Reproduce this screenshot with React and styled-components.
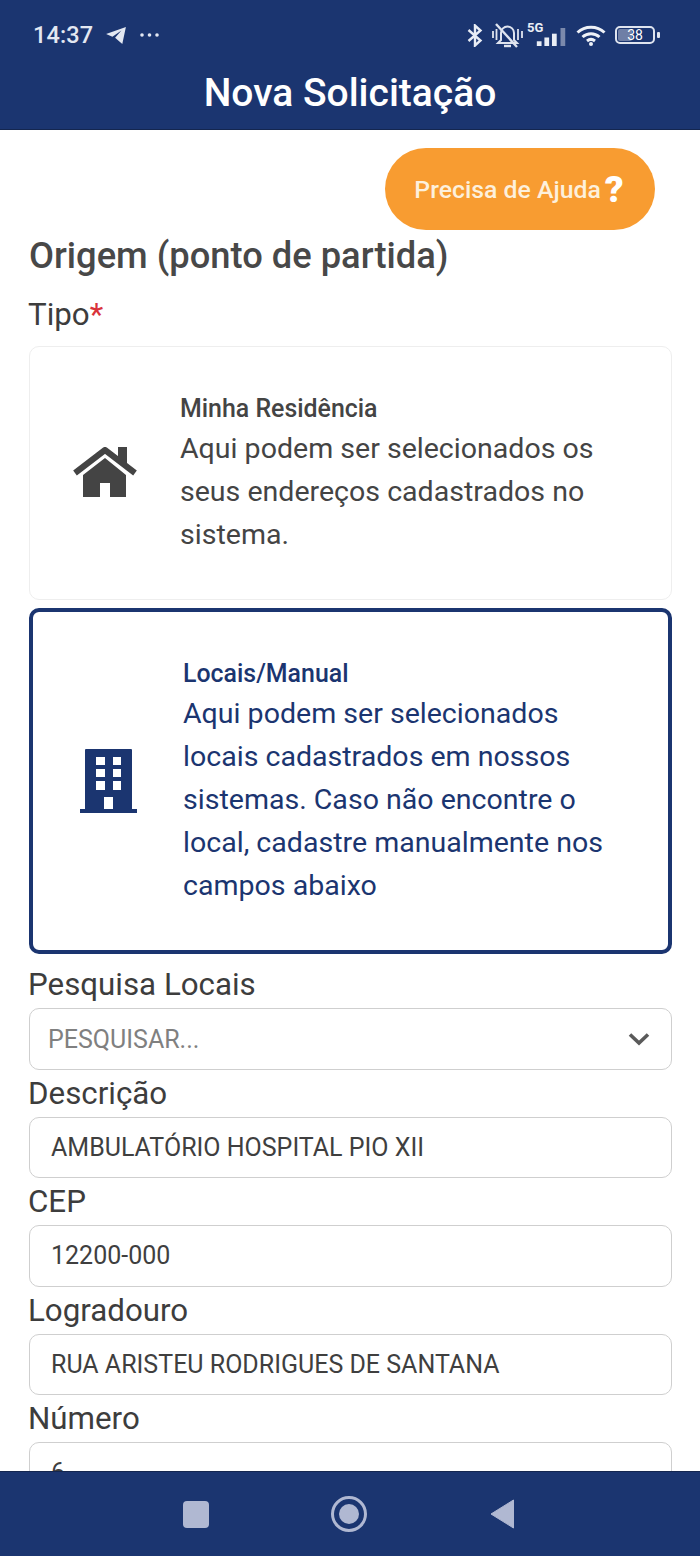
import React from "react";
import styled, { createGlobalStyle } from "styled-components";

const Global = createGlobalStyle`
  html, body { margin: 0; padding: 0; background: #fff; }
  * { box-sizing: border-box; }
`;
const NAVY = "#1b3570";
const Screen = styled.div`
  width: 700px; height: 1556px; display: flex; flex-direction: column; overflow: hidden;
  font-family: Roboto, "Liberation Sans", sans-serif; color: #3b3b3b; background: #fff;
`;
const Header = styled.header`
  height: 130px; flex: none; background: ${NAVY}; color: #fff; display: flex; flex-direction: column;
  border-bottom: 1px solid #14264f;
`;
const StatusBar = styled.div`
  height: 70px; padding: 0 45px 0 33px; display: flex; justify-content: space-between; align-items: center; flex: none;
  color: #e3e8f2;
`;
const StatusGroup = styled.div`display: flex; align-items: center; gap: ${p => p.$gap || 0}px;`;
const Clock = styled.span`font-size: 23.5px; font-weight: 500; letter-spacing: 0.1px;`;
const Title = styled.h1`
  margin: 1px 0 0; text-align: center; font-size: 39px; font-weight: 500; line-height: 44px; color: #fff;
`;
const FiveG = styled.div`
  position: relative; width: 40px; height: 24px; margin-left: -5px; padding: 5px 0 0 9px;
  & > svg { display: block; }
`;
const FiveGLabel = styled.span`
  position: absolute; left: 0; top: -3px; font-size: 13px; font-weight: 700; color: #e9edf5;
`;
const Battery = styled.div`
  width: 40px; height: 18px; border: 2px solid #dfe4ef; border-radius: 5px; position: relative; display: flex;
  align-items: center; justify-content: center; font-size: 14px; color: #fff; font-weight: 400; padding: 1px;
  &::after { content: ""; position: absolute; right: -7px; top: 4px; width: 3px; height: 6px; background: #dfe4ef; border-radius: 1px; }
`;
const BatteryFill = styled.span`
  position: absolute; left: 1px; top: 1px; bottom: 1px; width: 38%; background: #6f7fa6; border-radius: 2px;
`;
const BatteryText = styled.span`position: relative; line-height: 1;`;

const Content = styled.main`
  flex: 1; min-height: 0; overflow: hidden; padding: 18px 28px 0 29px; display: flex; flex-direction: column;
`;
const HelpRow = styled.div`display: flex; justify-content: flex-end; padding-right: 17px;`;
const HelpButton = styled.button`
  width: 270px; height: 82px; border: none; border-radius: 41px; background: #f89c31; color: #fdf0dc;
  display: flex; align-items: center; justify-content: center; gap: 4px; padding: 0 2px 0 0;
  font: 500 24.8px Roboto, sans-serif;
`;
const HelpMark = styled.span`font-size: 37px; font-weight: 900; color: #fff; line-height: 1;`;
const SectionTitle = styled.h2`
  margin: 5px 0 0; font-size: 36.3px; font-weight: 500; line-height: 42px; color: #484848;
`;
const FieldLabel = styled.div`
  font-size: 31.3px; line-height: 38px; color: #3d3d3d; flex: none; margin: 0 0 4px -1px;
`;
const TipoLabel = styled(FieldLabel)`margin-top: 19px; margin-bottom: 12px;`;
const Required = styled.span`color: #d9323a;`;
const OptionCard = styled.div`
  flex: none; display: flex; align-items: center; border-radius: 10px;
  height: ${p => p.$selected ? 346 : 254}px;
  margin-bottom: ${p => p.$selected ? 12 : 8}px;
  border: ${p => p.$selected ? `4px solid ${NAVY}` : "1px solid #eeeeee"};
  color: ${p => p.$selected ? NAVY : "#444"};
`;
const IconSlot = styled.div`
  flex: none; display: flex; justify-content: center; width: 150px;
`;
const OptionBody = styled.div`flex: 1; min-width: 0; padding-right: 30px;`;
const OptionTitle = styled.div`font-size: 24.9px; font-weight: 500; line-height: 36px;`;
const OptionText = styled.div`font-size: 28.55px; line-height: 43px;`;
const FieldBox = styled.div`
  flex: none; height: ${p => p.$tall ? 62 : 61.3}px; border: 1px solid #cfcfcf; border-radius: 10px; background: #fff;
  display: flex; align-items: center; justify-content: space-between;
  padding: 0 ${p => p.$tall ? 21 : 22}px 0 ${p => p.$tall ? 18 : 21}px;
  font-size: 25px; color: ${p => p.$muted ? "#808080" : "#3f3f3f"};
  margin-bottom: 5px;
`;
const Field = styled.div`display: flex; flex-direction: column;`;
const NavBar = styled.nav`
  height: 85px; flex: none; background: ${NAVY}; display: flex; align-items: center;
  border-top: 1px solid #14264f; position: relative; z-index: 1; padding-left: 183px;
`;
const NavSquare = styled.div`width: 26px; height: 27px; border-radius: 4px; background: #b0b8d2;`;
const NavHome = styled.div`
  width: 36px; height: 36px; border-radius: 50%; border: 3px solid #b0b8d2; display: flex; align-items: center; justify-content: center;
  margin-left: 122px; margin-right: 123px;
  &::after { content: ""; width: 20px; height: 20px; border-radius: 50%; background: #b0b8d2; }
`;

const Telegram = () => (
  <svg width="22" height="18" viewBox="0 0 24 20"><path d="M23 1 L1 9 L8 12 L18 5 L11 13 L19 20 Z" fill="#e3e8f2"/></svg>
);
const Dots = () => (
  <svg width="22" height="6" viewBox="0 0 22 6"><circle cx="3" cy="3" r="1.8" fill="#e3e8f2"/><circle cx="10.5" cy="3" r="1.8" fill="#e3e8f2"/><circle cx="18" cy="3" r="1.8" fill="#e3e8f2"/></svg>
);
const Bluetooth = () => (
  <svg width="16" height="23" viewBox="0 0 16 23" fill="none" stroke="#e9edf5" strokeWidth="2.4"><path d="M1.5 6 L13.5 16.5 L8 21.5 V1.5 L13.5 6.5 L1.5 17"/></svg>
);
const MuteVibrate = () => (
  <svg width="31" height="25" viewBox="0 0 31 25" fill="none" stroke="#dfe4ef" strokeWidth="2">
    <path d="M9 17 V10 a6.5 6.5 0 0 1 13 0 V17 l3 3 H6 Z"/>
    <path d="M12 23 h7" strokeWidth="2.4"/>
    <path d="M4 1 L25 24" strokeWidth="2.4"/>
    <path d="M1 8 V15 M4.5 6 V17 M26 6 V17 M30 8 V15" strokeWidth="1.8"/>
  </svg>
);
const Signal = () => (
  <svg width="31" height="18" viewBox="0 0 31 19">
    <rect x="0" y="14" width="5" height="5" fill="#e9edf5"/>
    <rect x="8" y="10" width="5" height="9" fill="#e9edf5"/>
    <rect x="16" y="6" width="5" height="13" fill="#e9edf5"/>
    <rect x="25" y="0" width="5" height="19" fill="#7b89ac"/>
  </svg>
);
const Wifi = () => (
  <svg width="30" height="21" viewBox="0 0 30 21" fill="none" stroke="#eef1f7" strokeWidth="3">
    <path d="M1.5 7.5 C9 0.5 21 0.5 28.5 7.5"/>
    <path d="M6.5 12 C11.5 7.5 18.5 7.5 23.5 12"/>
    <path d="M11 16 C13.5 14 16.5 14 19 16"/>
    <circle cx="15" cy="19" r="2" fill="#eef1f7" stroke="none"/>
  </svg>
);
const HouseIcon = () => (
  <svg width="66" height="52" viewBox="0 0 66 52">
    <rect x="46" y="0" width="9" height="16" fill="#444"/>
    <path d="M3 26 L33 3 L63 26" fill="none" stroke="#444" strokeWidth="6" strokeLinejoin="round"/>
    <path d="M33 11 L54 28 V50 H38 V36 H28 V50 H11 V28 Z" fill="#444"/>
  </svg>
);
const BuildingIcon = () => (
  <svg width="57" height="64" viewBox="0 0 57 64" fill={NAVY}>
    <path fillRule="evenodd" d="M6 0 H51 a1 1 0 0 1 1 1 V60 H57 V64 H0 V60 H5 V1 a1 1 0 0 1 1 -1 Z
      M16 8 V16 H25 V8 Z M33 8 V16 H41 V8 Z M16 20 V28 H25 V20 Z M33 20 V28 H41 V20 Z
      M16 32 V41 H25 V32 Z M33 32 V41 H41 V32 Z M24 48 V60 H33 V48 Z"/>
  </svg>
);
const Chevron = () => (
  <svg width="22" height="14" viewBox="0 0 22 14" fill="none" stroke="#5a5a5a" strokeWidth="3.6"><path d="M2 2.5 L11 11 L20 2.5"/></svg>
);
const NavBack = () => (
  <svg width="24" height="30" viewBox="0 0 24 30"><path d="M23.5 1 V29 L1 15 Z" fill="#b0b8d2" stroke="#b0b8d2" strokeLinejoin="round"/></svg>
);

const fields = [
  ["Descrição", "AMBULATÓRIO HOSPITAL PIO XII"],
  ["CEP", "12200-000"],
  ["Logradouro", "RUA ARISTEU RODRIGUES DE SANTANA"],
  ["Número", "6"],
];

export default function App() {
  return (
    <Screen>
      <Global />
      <Header>
        <StatusBar>
          <StatusGroup $gap={12}>
            <Clock>14:37</Clock>
            <Telegram />
            <Dots />
          </StatusGroup>
          <StatusGroup $gap={9}>
            <Bluetooth />
            <MuteVibrate />
            <FiveG>
              <FiveGLabel>5G</FiveGLabel>
              <Signal />
            </FiveG>
            <Wifi />
            <Battery><BatteryFill /><BatteryText>38</BatteryText></Battery>
          </StatusGroup>
        </StatusBar>
        <Title>Nova Solicitação</Title>
      </Header>
      <Content>
        <HelpRow>
          <HelpButton>Precisa de Ajuda<HelpMark>?</HelpMark></HelpButton>
        </HelpRow>
        <SectionTitle>Origem (ponto de partida)</SectionTitle>
        <TipoLabel>Tipo<Required>*</Required></TipoLabel>
        <OptionCard>
          <IconSlot><HouseIcon /></IconSlot>
          <OptionBody>
            <OptionTitle>Minha Residência</OptionTitle>
            <OptionText>Aqui podem ser selecionados os seus endereços cadastrados no sistema.</OptionText>
          </OptionBody>
        </OptionCard>
        <OptionCard $selected>
          <IconSlot><BuildingIcon /></IconSlot>
          <OptionBody>
            <OptionTitle>Locais/Manual</OptionTitle>
            <OptionText>Aqui podem ser selecionados locais cadastrados em nossos sistemas. Caso não encontre o local, cadastre manualmente nos campos abaixo</OptionText>
          </OptionBody>
        </OptionCard>
        <Field>
          <FieldLabel>Pesquisa Locais</FieldLabel>
          <FieldBox $tall $muted>PESQUISAR...<Chevron /></FieldBox>
        </Field>
        {fields.map(([label, value]) => (
          <Field key={label}>
            <FieldLabel>{label}</FieldLabel>
            <FieldBox>{value}</FieldBox>
          </Field>
        ))}
      </Content>
      <NavBar>
        <NavSquare />
        <NavHome />
        <NavBack />
      </NavBar>
    </Screen>
  );
}
